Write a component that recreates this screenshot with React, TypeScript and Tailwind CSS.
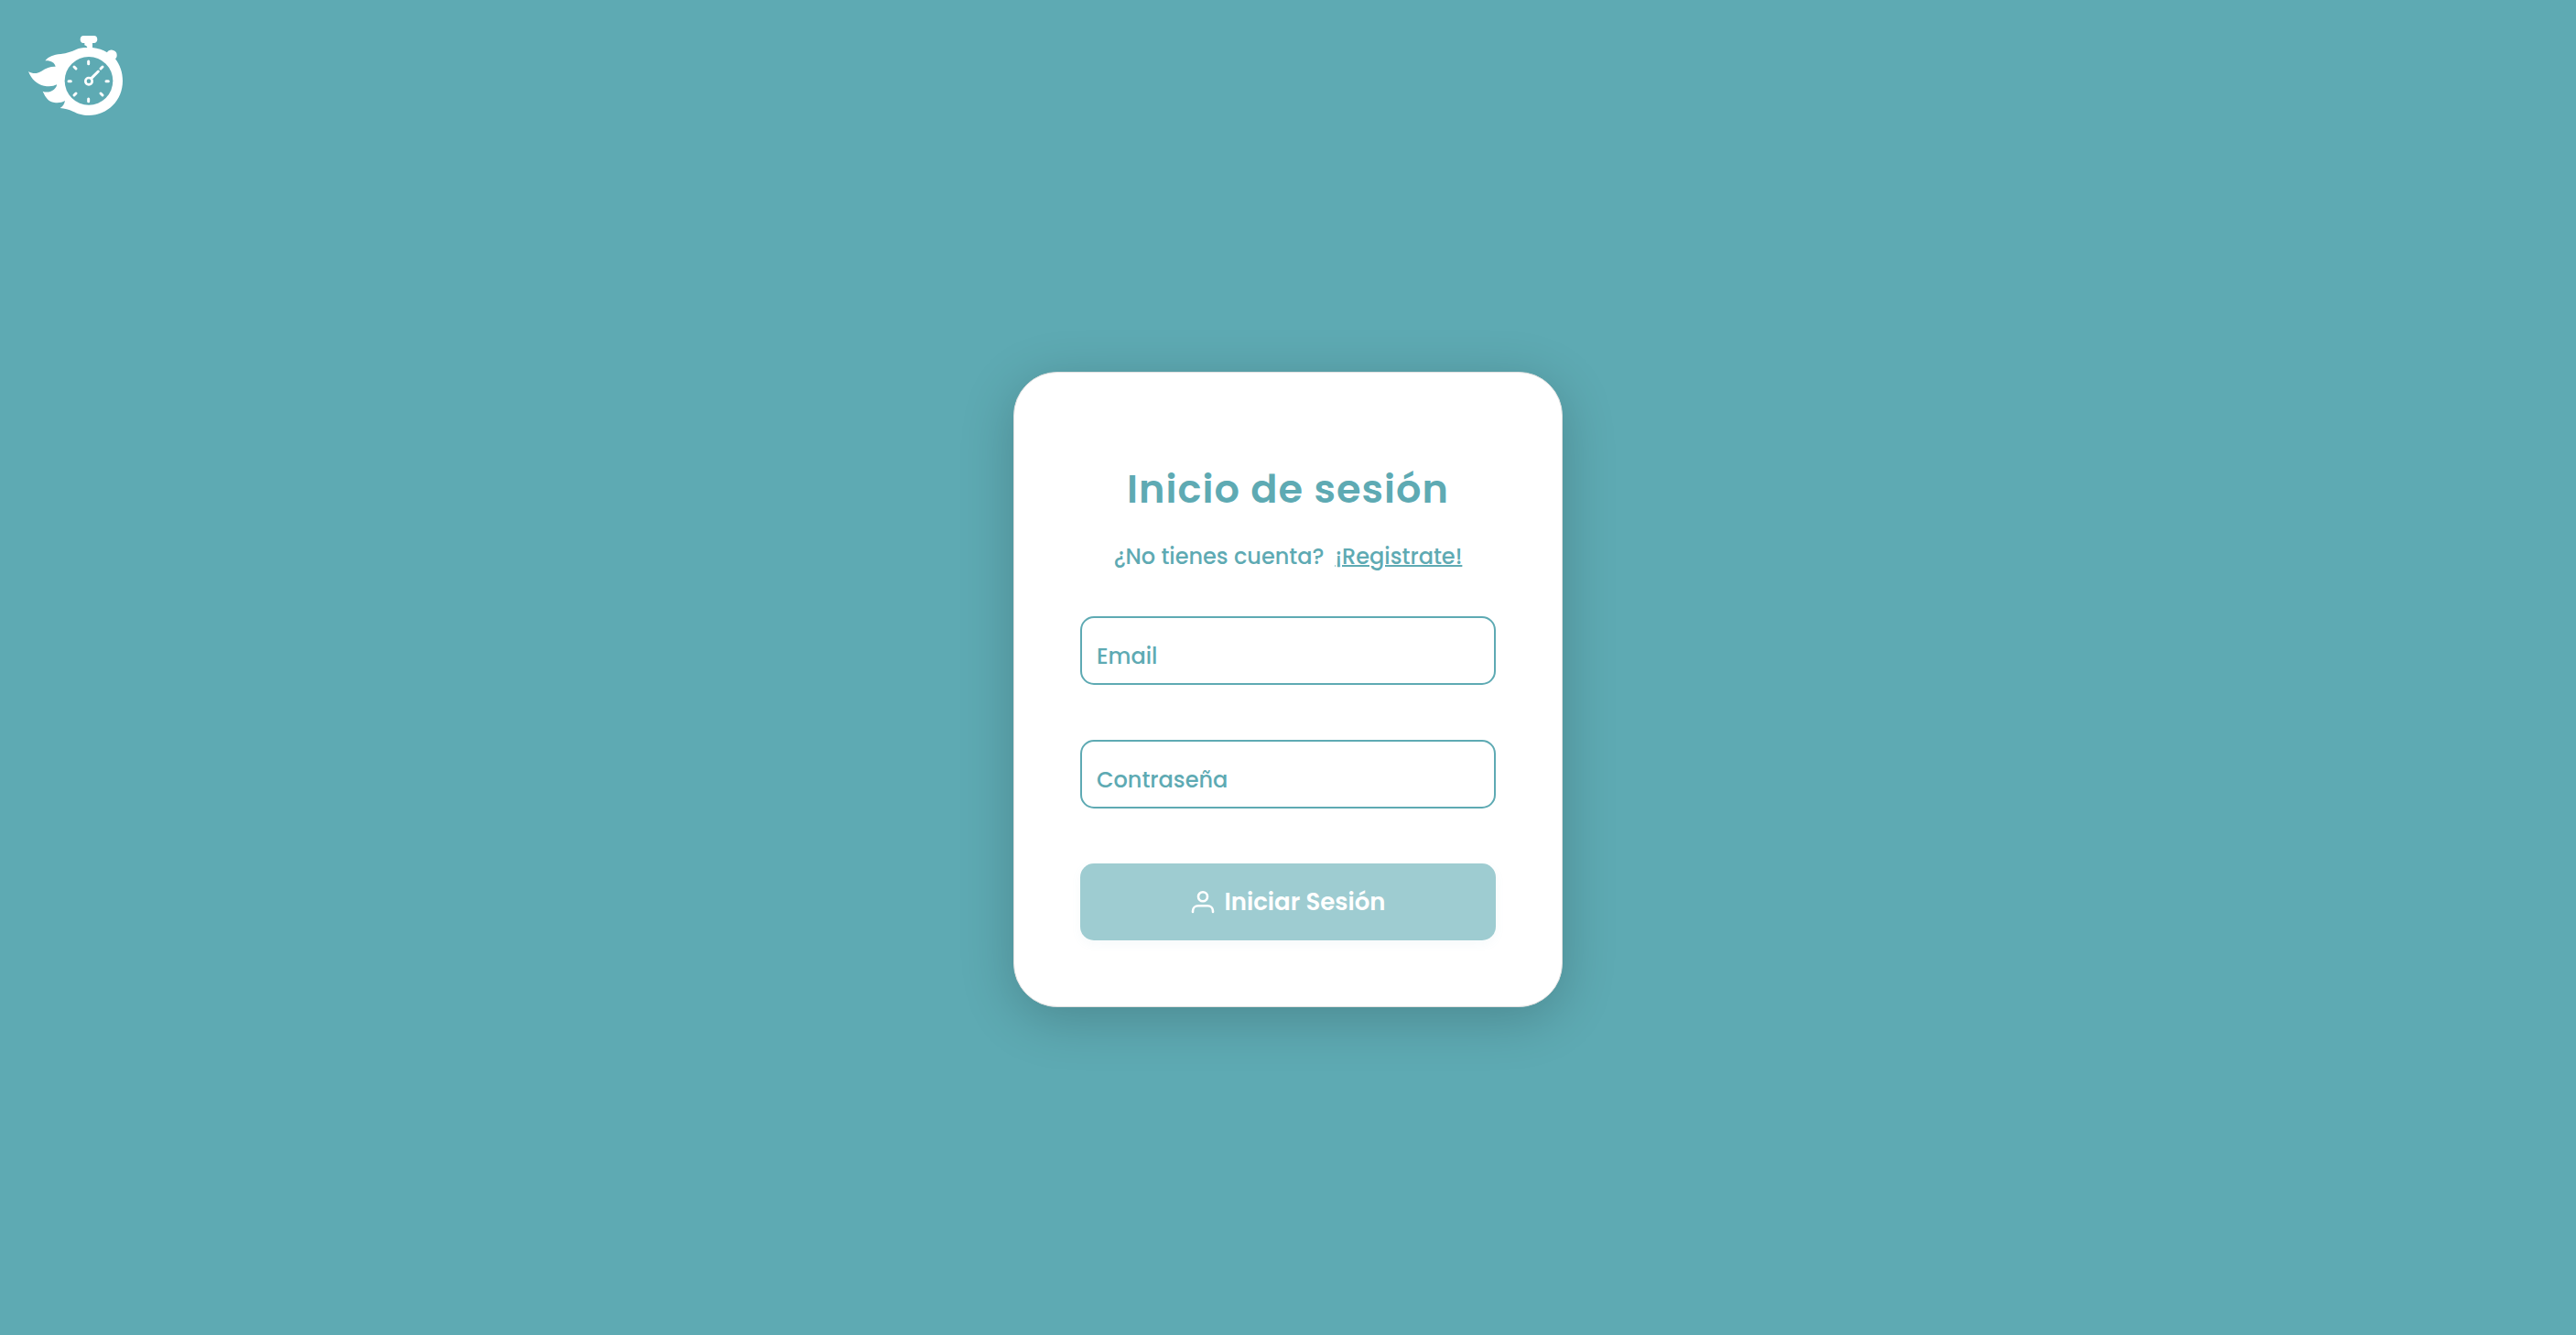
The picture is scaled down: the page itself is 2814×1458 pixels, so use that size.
import React, { useState } from "react";

function Logo() {
  return (
    <svg viewBox="33 27 309 261" className="h-[87px] w-[103px]" fill="none" aria-hidden="true">
      <path
        fill="#fff"
        d="M226 66 C225 62 222 60 217 58 V51 H213 C206 51 203 46 203 39 C203 32 207 27 214 27 H248 C255 27 259 32 259 39 C259 46 255 51 248 51 H243 V66 C261 68 277 73 291 82 C294 76 301 73 308 74 C318 75 324 83 323 92 C323 96 321 100 318 103 C333 122 342 148 342 175 C342 239 293 288 231 288 C209 288 194 282 179 275 C166 269 152 265 137 264 C146 259 151 251 153 240 C143 246 131 248 118 246 C99 243 90 231 80 209 C92 214 105 212 117 203 C123 198 126 193 126 187 C115 193 101 194 84 191 C61 186 44 171 33 144 C47 152 60 153 76 143 C92 132 107 127 122 128 C119 115 107 108 88 109 C99 95 115 89 139 87 C160 85 174 79 190 72 C200 68 210 66 226 66 Z"
      />
      <circle cx="231" cy="175" r="79" fill="#5eaab3" />
      <circle cx="231" cy="176" r="11" stroke="#fff" strokeWidth="8" />
      <path
        stroke="#fff"
        strokeWidth="9"
        strokeLinecap="round"
        d="M239 167 L262 144 M230 111 V119 M230 234 V242 M165 176 H172 M288 176 H295 M183 129 L189 135 M270 135 L276 129 M270 216 L276 222 M183 222 L189 216"
      />
    </svg>
  );
}

function UserIcon() {
  return (
    <svg viewBox="0 0 26 26" className="size-[26px]" fill="none" stroke="currentColor" strokeWidth="2.6" strokeLinecap="round" aria-hidden="true">
      <circle cx="13" cy="7.2" r="5" />
      <path d="M2 24 V23 C2 19.500 4.500 17.300 8 17.300 H18 C21.500 17.300 24 19.500 24 23 V24" />
    </svg>
  );
}

type FieldProps = {
  id: string;
  label: string;
  type: string;
  value: string;
  onChange: (value: string) => void;
};

function Field({ id, label, type, value, onChange }: FieldProps) {
  return (
    <div className="relative">
      <input
        id={id}
        type={type}
        value={value}
        onChange={(event) => onChange(event.target.value)}
        className="peer block h-[75px] w-full rounded-[15px] border-2 border-[#5eaab3] bg-white px-4 pt-2 text-2xl text-[#5eaab3] outline-none"
      />
      <label
        htmlFor={id}
        className={
          value
            ? "sr-only"
            : "pointer-events-none absolute inset-x-0 bottom-0 flex h-[62px] items-center px-[18px] text-2xl font-medium text-[#5eaab3] peer-focus:opacity-50"
        }
      >
        {label}
      </label>
    </div>
  );
}

export default function App() {
  const [email, setEmail] = useState("");
  const [password, setPassword] = useState("");

  return (
    <div className="grid min-h-screen grid-rows-[1fr_auto_1fr] bg-[#5eaab3] pt-12 font-['Poppins','Inter',sans-serif]">
      <header className="-mt-12 px-[31px] pt-[39px]">
        <a href="#" aria-label="Inicio" className="inline-block">
          <Logo />
        </a>
      </header>
      <main className="flex justify-center">
        <form
          onSubmit={(event) => event.preventDefault()}
          className="flex w-full max-w-[600px] flex-col rounded-[48px] border border-[#e0e0e0] bg-white p-[72px] shadow-[0_12px_60px_rgba(0,0,0,0.2)]"
        >
          <h1 className="mt-[25px] text-center text-[43px] leading-[60px] font-semibold tracking-wide text-[#5eaab3]">
            Inicio de sesión
          </h1>
          <p className="mt-[26px] flex justify-center gap-3 text-2xl leading-9 font-medium text-[#5eaab3]">
            <span>¿No tienes cuenta?</span>
            <a href="#registro" className="underline decoration-2">
              ¡Registrate!
            </a>
          </p>
          <div className="mt-[47px] flex flex-col gap-[60px]">
            <Field id="email" label="Email" type="email" value={email} onChange={setEmail} />
            <Field id="password" label="Contraseña" type="password" value={password} onChange={setPassword} />
            <button
              type="submit"
              className="flex h-[84px] w-full items-center justify-center gap-[11px] rounded-[15px] bg-[#9eccd1] text-[26px] font-semibold text-white shadow-[0_4px_12px_rgba(94,170,179,0.06)]"
            >
              <UserIcon />
              Iniciar Sesión
            </button>
          </div>
        </form>
      </main>
    </div>
  );
}
